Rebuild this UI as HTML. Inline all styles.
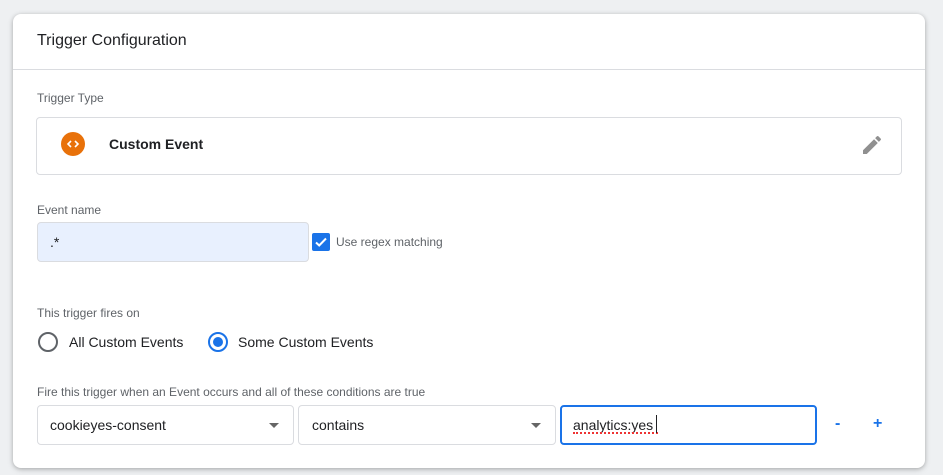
<!DOCTYPE html>
<html><head><meta charset="utf-8"><style>
*{box-sizing:border-box;margin:0;padding:0}
body{width:943px;height:475px;background:#eef0f2;font-family:"Liberation Sans",Arial,sans-serif;position:relative;overflow:hidden;color:#202124}
.card{position:absolute;left:13px;top:14px;width:912px;height:454px;background:#fff;border-radius:8px;box-shadow:0 1px 4px rgba(0,0,0,.25),0 2px 8px rgba(0,0,0,.08)}
.a{position:absolute;white-space:nowrap}
.lbl{font-size:12px;color:#5f6368}
.box{position:absolute;border:1px solid #dadce0;border-radius:4px;background:#fff}
.arrow{position:absolute;width:0;height:0;border-left:5px solid transparent;border-right:5px solid transparent;border-top:5px solid #666}
</style></head><body>
<div class="card"></div>
<div class="a" style="left:37px;top:32px;font-size:16px;color:#202124">Trigger Configuration</div>
<div class="a" style="left:13px;top:69px;width:912px;height:1px;background:#dadce0"></div>
<div class="a lbl" style="left:37px;top:91px">Trigger Type</div>
<div class="box" style="left:36px;top:117px;width:866px;height:58px"></div>
<div class="a" style="left:61px;top:132px;width:24px;height:24px;border-radius:50%;background:#e8710a"></div>
<svg class="a" style="left:61px;top:132px" width="24" height="24" viewBox="0 0 24 24"><path d="M10 9l-3 3 3 3M14 9l3 3-3 3" stroke="#fff" stroke-width="1.6" fill="none"/></svg>
<div class="a" style="left:109px;top:136px;font-size:14px;font-weight:bold">Custom Event</div>
<svg class="a" style="left:860px;top:133px" width="24" height="24" viewBox="0 0 24 24"><path d="M3 17.25V21h3.75L17.81 9.94l-3.75-3.75L3 17.25zM20.71 7.04a1 1 0 000-1.41l-2.34-2.34a1 1 0 00-1.41 0l-1.83 1.83 3.75 3.75 1.83-1.83z" fill="#909090"/></svg>
<div class="a lbl" style="left:37px;top:203px">Event name</div>
<div class="a" style="left:37px;top:222px;width:272px;height:40px;background:#e8f0fe;border:1px solid #dadce0;border-radius:4px"></div>
<div class="a" style="left:50px;top:234px;font-size:14px">.*</div>
<div class="a" style="left:312px;top:233px;width:18px;height:18px;background:#1a73e8;border-radius:2px"></div>
<svg class="a" style="left:312px;top:233px" width="18" height="18" viewBox="0 0 18 18"><path d="M4 9.5l3.2 3L14 5.5" stroke="#fff" stroke-width="2" fill="none"/></svg>
<div class="a" style="left:336px;top:235px;font-size:12px;color:#5f6368">Use regex matching</div>
<div class="a lbl" style="left:37px;top:306px">This trigger fires on</div>
<div class="a" style="left:38px;top:332px;width:20px;height:20px;border:2px solid #5f6368;border-radius:50%"></div>
<div class="a" style="left:69px;top:334px;font-size:14px">All Custom Events</div>
<div class="a" style="left:208px;top:332px;width:20px;height:20px;border:2px solid #1a73e8;border-radius:50%"></div>
<div class="a" style="left:213px;top:337px;width:10px;height:10px;background:#1a73e8;border-radius:50%"></div>
<div class="a" style="left:238px;top:334px;font-size:14px">Some Custom Events</div>
<div class="a lbl" style="left:37px;top:385px">Fire this trigger when an Event occurs and all of these conditions are true</div>
<div class="box" style="left:37px;top:405px;width:257px;height:40px"></div>
<div class="a" style="left:50px;top:417px;font-size:14px">cookieyes-consent</div>
<div class="arrow" style="left:269px;top:423px"></div>
<div class="box" style="left:298px;top:405px;width:258px;height:40px"></div>
<div class="a" style="left:312px;top:417px;font-size:14px">contains</div>
<div class="arrow" style="left:531px;top:423px"></div>
<div class="box" style="left:560px;top:405px;width:257px;height:40px;border:2px solid #1a73e8"></div>
<div class="a" style="left:573px;top:417px;font-size:14px">analytics:yes</div>
<div class="a" style="left:573px;top:432px;width:85px;height:2px;border-bottom:2px dotted #e33"></div>
<div class="a" style="left:656px;top:415px;width:1px;height:18px;background:#202124"></div>
<div class="a" style="left:835px;top:415px;font-size:16px;color:#1a73e8;font-weight:bold">-</div>
<div class="a" style="left:873px;top:415px;font-size:16px;color:#1a73e8;font-weight:bold">+</div>
</body></html>
